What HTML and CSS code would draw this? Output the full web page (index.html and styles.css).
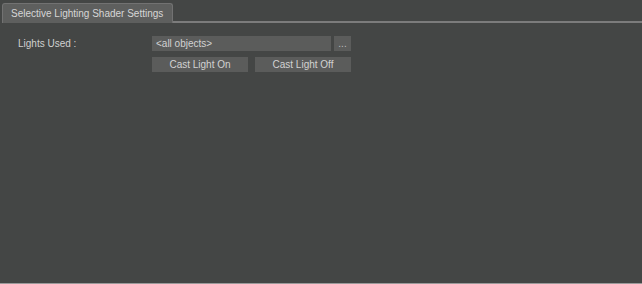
FILE: index.html
```html
<!DOCTYPE html>
<html lang="en">
<head>
  <meta charset="UTF-8" />
  <title>Selective Lighting Shader Settings</title>
  <link rel="stylesheet" href="styles.css">
</head>
<body>
  <div class="panel">
    <div class="tabbar">
      <div class="tab">Selective Lighting Shader Settings</div>
      <div class="tab-rest"></div>
    </div>

    <div class="content">
      <div class="row">
        <div class="label">Lights Used :</div>
        <div class="controls">
          <div class="picker">
            <div class="field">&lt;all objects&gt;</div>
            <div class="dots">...</div>
          </div>
          <div class="buttons">
            <div class="btn">Cast Light On</div>
            <div class="btn">Cast Light Off</div>
          </div>
        </div>
      </div>
    </div>
  </div>
</body>
</html>
```

FILE: styles.css
```css
body {
  margin: 0;
  padding: 0;
  background: #444645;
  font-family: "Liberation Sans", Arial, sans-serif;
  font-size: 10px;
  color: #d2d2d2;
}

.panel {
  height: 284px;
  box-sizing: border-box;
  border-bottom: 1px solid #9a9a9a;
}

.tabbar {
  display: flex;
  align-items: flex-end;
  padding: 3px 0 0 2px;
}

.tab {
  height: 19px;
  line-height: 19px;
  padding: 0 9px 0 8px;
  background: #5e5f5e;
  border: 1px solid #727272;
  border-bottom: none;
  border-radius: 3px 3px 0 0;
  color: #d6d6d6;
}

.tab-rest {
  flex: 1;
  height: 2px;
  background: #7c7c7c;
}

.content {
  padding: 13px 0 0 18px;
}

.row {
  display: flex;
}

.label {
  width: 134px;
  line-height: 15px;
  color: #d0d0d0;
}

.controls {
  display: flex;
  flex-direction: column;
  gap: 6px;
  width: 199px;
}

.picker {
  display: flex;
  gap: 3px;
}

.field {
  flex: 1;
  height: 15px;
  line-height: 15px;
  padding-left: 4px;
  background: #5b5c5b;
}

.dots {
  width: 17px;
  height: 15px;
  line-height: 15px;
  text-align: center;
  background: #5b5c5b;
  color: #bdbdbd;
}

.buttons {
  display: flex;
  justify-content: space-between;
}

.btn {
  width: 96px;
  height: 15px;
  line-height: 15px;
  text-align: center;
  background: #5b5c5b;
}
```
